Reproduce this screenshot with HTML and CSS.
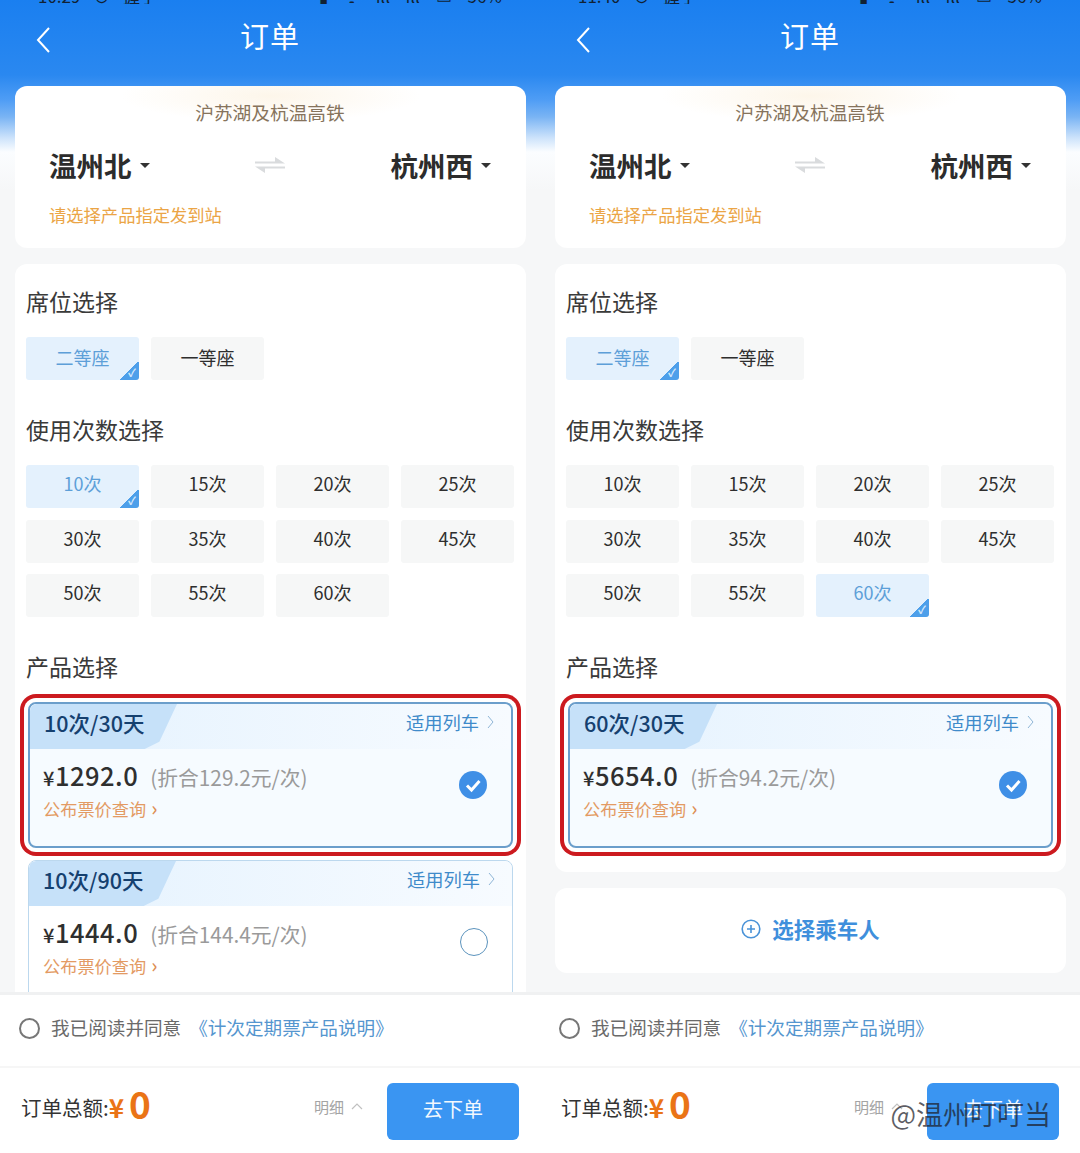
FILE: index.html
```html
<!DOCTYPE html>
<html lang="zh-CN">
<head>
    <meta charset="UTF-8">
    <title>订单</title>
    <link rel="stylesheet" href="styles.css">
</head>
<body>
    <div class="panels">
        <!-- 左边: 10次 -->
        <main class="phone">
            <div class="status"><span>10:29 ⊙ 握手 ·</span><span class="status-right">▮ ᯤ ıll ıll ▭ 56%</span></div>
            <header class="topbar">
                <svg class="back" viewBox="0 0 14 26"><path d="M13 1 L2 13 L13 25"/></svg>
                <h1>订单</h1>
            </header>
            <div class="scroll">
                <section class="card route">
                    <p class="route-name">沪苏湖及杭温高铁</p>
                    <div class="stations">
                        <span class="station">温州北<i class="caret"></i></span>
                        <svg class="swap" viewBox="0 0 30 18"><path d="M0 5.5 H20 V1 L30 7.5 H0 Z M0 10.5 H30 V12.5 H10 V17 Z"/></svg>
                        <span class="station">杭州西<i class="caret"></i></span>
                    </div>
                    <p class="route-tip">请选择产品指定发到站</p>
                </section>
                <section class="card options">
                    <h2>席位选择</h2>
                    <div class="chips">
                        <div class="chip on">二等座</div>
                        <div class="chip">一等座</div>
                    </div>
                    <h2>使用次数选择</h2>
                    <div class="chips counts">
                        <div class="chip on">10次</div>
                        <div class="chip">15次</div>
                        <div class="chip">20次</div>
                        <div class="chip">25次</div>
                        <div class="chip">30次</div>
                        <div class="chip">35次</div>
                        <div class="chip">40次</div>
                        <div class="chip">45次</div>
                        <div class="chip">50次</div>
                        <div class="chip">55次</div>
                        <div class="chip">60次</div>
                    </div>
                    <h2>产品选择</h2>
                    <div class="product picked">
                        <div class="product-head">
                            <span class="product-tag">10次/30天</span>
                            <span class="trains">适用列车<svg class="chev" viewBox="0 0 7 14"><path d="M1 1 L6 7 L1 13"/></svg></span>
                        </div>
                        <div class="product-body">
                            <div>
                                <p class="price"><small>¥</small>1292.0<span class="unit">(折合129.2元/次)</span></p>
                                <p class="fare">公布票价查询<b>›</b></p>
                            </div>
                            <svg class="tick" viewBox="0 0 28 28"><circle cx="14" cy="14" r="14"/><path d="M8 14.5 L12.5 19 L20.5 10"/></svg>
                        </div>
                    </div>
                    <div class="product">
                        <div class="product-head">
                            <span class="product-tag">10次/90天</span>
                            <span class="trains">适用列车<svg class="chev" viewBox="0 0 7 14"><path d="M1 1 L6 7 L1 13"/></svg></span>
                        </div>
                        <div class="product-body">
                            <div>
                                <p class="price"><small>¥</small>1444.0<span class="unit">(折合144.4元/次)</span></p>
                                <p class="fare">公布票价查询<b>›</b></p>
                            </div>
                            <span class="radio"></span>
                        </div>
                    </div>
                </section>
            </div>
            <footer class="bottom">
                <div class="agree"><span class="agree-dot"></span>我已阅读并同意<a>《计次定期票产品说明》</a></div>
                <div class="total">
                    <span class="total-label">订单总额:</span><span class="yen">¥</span><span class="amount">0</span>
                    <span class="detail">明细<svg class="up" viewBox="0 0 12 7"><path d="M1 6 L6 1 L11 6"/></svg></span>
                    <button class="submit">去下单</button>
                </div>
            </footer>
        </main>

        <!-- 右边: 60次 -->
        <main class="phone">
            <div class="status"><span>11:40 ⊙ 握手 ·</span><span class="status-right">▮ ᯤ ıll ıll ▭ 56%</span></div>
            <header class="topbar">
                <svg class="back" viewBox="0 0 14 26"><path d="M13 1 L2 13 L13 25"/></svg>
                <h1>订单</h1>
            </header>
            <div class="scroll">
                <section class="card route">
                    <p class="route-name">沪苏湖及杭温高铁</p>
                    <div class="stations">
                        <span class="station">温州北<i class="caret"></i></span>
                        <svg class="swap" viewBox="0 0 30 18"><path d="M0 5.5 H20 V1 L30 7.5 H0 Z M0 10.5 H30 V12.5 H10 V17 Z"/></svg>
                        <span class="station">杭州西<i class="caret"></i></span>
                    </div>
                    <p class="route-tip">请选择产品指定发到站</p>
                </section>
                <section class="card options">
                    <h2>席位选择</h2>
                    <div class="chips">
                        <div class="chip on">二等座</div>
                        <div class="chip">一等座</div>
                    </div>
                    <h2>使用次数选择</h2>
                    <div class="chips counts">
                        <div class="chip">10次</div>
                        <div class="chip">15次</div>
                        <div class="chip">20次</div>
                        <div class="chip">25次</div>
                        <div class="chip">30次</div>
                        <div class="chip">35次</div>
                        <div class="chip">40次</div>
                        <div class="chip">45次</div>
                        <div class="chip">50次</div>
                        <div class="chip">55次</div>
                        <div class="chip on">60次</div>
                    </div>
                    <h2>产品选择</h2>
                    <div class="product picked">
                        <div class="product-head">
                            <span class="product-tag">60次/30天</span>
                            <span class="trains">适用列车<svg class="chev" viewBox="0 0 7 14"><path d="M1 1 L6 7 L1 13"/></svg></span>
                        </div>
                        <div class="product-body">
                            <div>
                                <p class="price"><small>¥</small>5654.0<span class="unit">(折合94.2元/次)</span></p>
                                <p class="fare">公布票价查询<b>›</b></p>
                            </div>
                            <svg class="tick" viewBox="0 0 28 28"><circle cx="14" cy="14" r="14"/><path d="M8 14.5 L12.5 19 L20.5 10"/></svg>
                        </div>
                    </div>
                </section>
                <section class="card passenger">
                    <svg class="plus" viewBox="0 0 20 20"><circle cx="10" cy="10" r="8.8"/><path d="M10 6 V14 M6 10 H14"/></svg>
                    <span>选择乘车人</span>
                </section>
            </div>
            <footer class="bottom">
                <div class="agree"><span class="agree-dot"></span>我已阅读并同意<a>《计次定期票产品说明》</a></div>
                <div class="total">
                    <span class="total-label">订单总额:</span><span class="yen">¥</span><span class="amount">0</span>
                    <span class="detail">明细<svg class="up" viewBox="0 0 12 7"><path d="M1 6 L6 1 L11 6"/></svg></span>
                    <button class="submit">去下单</button>
                </div>
            </footer>
            <span class="watermark">@温州叮叮当</span>
        </main>
    </div>
</body>
</html>
```

FILE: styles.css
```css
* {
    margin: 0;
    padding: 0;
    box-sizing: border-box;
}

body {
    width: 1080px;
    height: 1153px;
    overflow: hidden;
    background: #fff;
    font-family: "Noto Sans CJK SC", "Noto Sans", sans-serif;
    color: #333;
}

.panels {
    display: flex;
}

.phone {
    position: relative;
    width: 540px;
    height: 1153px;
    display: flex;
    flex-direction: column;
    overflow: hidden;
    background: linear-gradient(180deg, #1a7ff0 0, #2a88f0 75px, #4f9df5 100px, #7ab4f4 117px, #cde3fb 138px, #fbfdff 152px, #f6f7f8 190px);
}

/* 状态栏只露出底部一点 */
.status {
    height: 4px;
    flex: none;
    padding: 0 38px;
    display: flex;
    justify-content: space-between;
    font-size: 17px;
    line-height: 4px;
    overflow: hidden;
    color: #123;
    word-spacing: 9px;
}

.status span {
    margin-top: -6px;
}

.status-right {
    word-spacing: 12px;
}

.topbar {
    position: relative;
    height: 82px;
    flex: none;
    display: flex;
    justify-content: center;
}

.topbar h1 {
    font-size: 29px;
    font-weight: 400;
    color: #fff;
    line-height: 34px;
    margin-top: 14px;
    letter-spacing: 1px;
}

.back {
    position: absolute;
    left: 36px;
    top: 23px;
    width: 14px;
    height: 26px;
    fill: none;
    stroke: #fff;
    stroke-width: 2;
}

.scroll {
    flex: 1;
    min-height: 0;
    overflow: hidden;
    padding: 0 14px 0 15px;
}

.card {
    background: #fff;
    border-radius: 12px;
}

.route {
    height: 162px;
    padding: 15px 35px 0 34px;
    background: radial-gradient(ellipse 150px 26px at 50% 10px, #fdf6ea 0, #fff 100%), #fff;
}

.route-name {
    text-align: center;
    font-size: 18.7px;
    line-height: 22px;
    color: #86735c;
}

.stations {
    display: flex;
    justify-content: space-between;
    align-items: center;
    margin-top: 24px;
}

.station {
    font-size: 27.5px;
    font-weight: 700;
    line-height: 36px;
    color: #2c2c2c;
    display: flex;
    align-items: center;
}

.caret {
    width: 0;
    height: 0;
    margin-left: 8px;
    border: 5.5px solid transparent;
    border-top: 5px solid #333;
    border-bottom: 0;
}

.swap {
    width: 30px;
    height: 18px;
    fill: #d9dbdd;
}

.route-tip {
    margin-top: 21px;
    font-size: 17.3px;
    line-height: 22px;
    color: #eba546;
}

.options {
    margin-top: 16px;
    padding: 0 11px 12px;
}

.options h2 {
    font-size: 23px;
    font-weight: 400;
    line-height: 30px;
    color: #3a3a3a;
    padding-top: 22px;
    height: 73px;
}

.chips + h2 {
    margin-top: 12px;
}

.chips {
    display: grid;
    grid-template-columns: repeat(4, 113px);
    column-gap: 12px;
    row-gap: 11.5px;
}

.chip {
    position: relative;
    height: 43px;
    background: #f6f7f7;
    border-radius: 3px;
    text-align: center;
    font-size: 18px;
    line-height: 41px;
    color: #2e2e2e;
    overflow: hidden;
}

.counts .chip {
    line-height: 37px;
}

.chip.on {
    background: #e4f1fd;
    color: #5d9fd8;
}

.chip.on::after {
    content: "✓";
    position: absolute;
    right: 0;
    bottom: 0;
    width: 18px;
    height: 18px;
    background: linear-gradient(135deg, transparent 50%, #4d9fea 50%);
    color: #d6eafc;
    font-size: 11px;
    font-weight: 700;
    line-height: 20px;
    text-align: right;
    padding-right: 3px;
}

.product {
    height: 146px;
    margin: 0 2px 12px;
    border: 1px solid #bcd8ee;
    border-radius: 8px;
    overflow: hidden;
    background: #fff;
}

.product.picked {
    overflow: visible;
    border: 2px solid #6b9ecb;
    background: #f6fbff;
    box-shadow: 0 0 0 4px #fff, 0 0 0 8px #cc1a1f;
}

.product-head {
    display: flex;
    justify-content: space-between;
    height: 45px;
    background: linear-gradient(90deg, #e4f2fe, #f7fbff);
    border-radius: 7px 7px 0 0;
    overflow: hidden;
}

.product-tag {
    width: 147px;
    padding: 1px 0 0 14px;
    font-size: 21.5px;
    font-weight: 500;
    line-height: 36px;
    color: #15406f;
    background: #c6e1f9;
    clip-path: polygon(0 0, 100% 0, 88% 84%, 78% 100%, 0 100%);
}

.trains {
    display: flex;
    align-items: center;
    padding: 0 17px 9px 0;
    font-size: 18.3px;
    color: #3f8bca;
}

.chev {
    width: 7px;
    height: 14px;
    margin-left: 8px;
    fill: none;
    stroke: #8fb5d6;
    stroke-width: 1;
}

.product-body {
    display: flex;
    justify-content: space-between;
    align-items: flex-start;
    padding: 8px 24px 0 14px;
}

.picked .product-body {
    padding-left: 13px;
}

.price {
    font-size: 25.5px;
    font-weight: 500;
    line-height: 36px;
    color: #2f2f2f;
    letter-spacing: .5px;
}

.price small {
    font-size: 20px;
}

.unit {
    margin-left: 12px;
    font-size: 20.8px;
    font-weight: 400;
    color: #9a9a9a;
    letter-spacing: 0;
}

.fare {
    font-size: 17.2px;
    line-height: 23px;
    color: #e39a63;
}

.fare b {
    margin-left: 5px;
    font-size: 20px;
    font-weight: 500;
    color: #dd8e52;
}

.tick {
    width: 28px;
    height: 28px;
    margin-top: 14px;
    fill: #3f8fe6;
}

.tick path {
    fill: none;
    stroke: #fff;
    stroke-width: 3;
}

.radio {
    width: 28px;
    height: 28px;
    margin-top: 14px;
    border: 1.5px solid #5b93bd;
    border-radius: 50%;
}

.passenger {
    margin-top: 16px;
    height: 85px;
    padding-bottom: 4px;
    display: flex;
    justify-content: center;
    align-items: center;
    gap: 11px;
    font-size: 21.5px;
    font-weight: 700;
    color: #3f8fdc;
}

.plus {
    width: 20px;
    height: 20px;
    fill: none;
    stroke: #4a93d8;
    stroke-width: 1.6;
}

.bottom {
    height: 161px;
    flex: none;
    background: #fff;
    border-top: 3px solid #f0f1f2;
}

.agree {
    height: 73px;
    padding: 0 0 8px 19px;
    display: flex;
    align-items: center;
    font-size: 18.6px;
    color: #6a6a6a;
    border-bottom: 2px solid #f6f6f6;
}

.agree-dot {
    width: 21px;
    height: 21px;
    margin: 3px 11px 0 0;
    border: 2px solid #777;
    border-radius: 50%;
}

.agree a {
    margin-left: 8px;
    color: #5596cf;
}

.total {
    padding: 0 21px;
    height: 77px;
    display: flex;
    align-items: center;
    font-size: 20.5px;
    color: #333;
}

.yen {
    color: #ea7416;
    font-size: 26px;
    font-weight: 700;
}

.amount {
    margin-left: 5px;
    margin-top: -8px;
    color: #ea7416;
    font-size: 37px;
    font-weight: 700;
    line-height: 40px;
}

.detail {
    margin-left: auto;
    display: flex;
    align-items: center;
    font-size: 15px;
    color: #a4a4a4;
}

.up {
    width: 12px;
    height: 7px;
    margin-left: 7px;
    fill: none;
    stroke: #c0c0c0;
    stroke-width: 1.2;
}

.submit {
    align-self: flex-start;
    width: 132px;
    height: 57px;
    margin: 15px 0 0 24px;
    padding-bottom: 7px;
    border: 0;
    border-radius: 6px;
    background: #3a95f2;
    color: #f2f8fe;
    font: 400 20px "Noto Sans CJK SC", sans-serif;
}

.watermark {
    position: absolute;
    right: 29px;
    bottom: 22px;
    font-size: 27px;
    line-height: 34px;
    color: rgba(30, 30, 40, .72);
}
```
